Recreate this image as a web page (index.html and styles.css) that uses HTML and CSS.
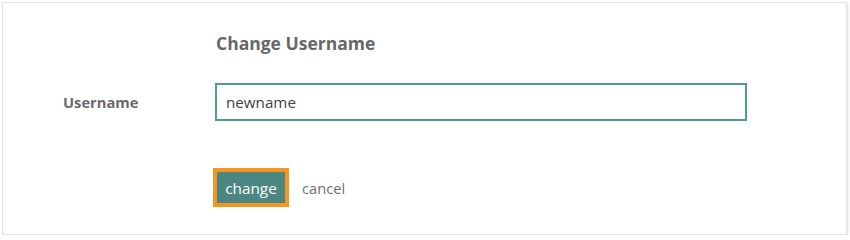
FILE: index.html
```html
<!DOCTYPE html>
<html>
<head>
<meta charset="utf-8">
<link rel="stylesheet" href="styles.css">
</head>
<body>
<div class="card">
  <div class="row head-row">
    <div class="label-col"></div>
    <h2 class="title">Change Username</h2>
  </div>
  <div class="row field-row">
    <label class="label-col label" for="u">Username</label>
    <div class="input">newname</div>
  </div>
  <div class="row actions-row">
    <div class="label-col"></div>
    <div class="actions">
      <button class="btn">change</button>
      <span class="cancel">cancel</span>
    </div>
  </div>
</div>
</body>
</html>
```
FILE: styles.css
```css
html, body {
  margin: 0;
  padding: 0;
  background: #ffffff;
}
body {
  font-family: "Open Sans", "Liberation Sans", sans-serif;
  color: #666;
}
.card {
  box-sizing: border-box;
  margin: 2px 0 0 2px;
  width: 845px;
  height: 233px;
  border: 1px solid #e2e2e2;
  box-shadow: 1px 1px 2px rgba(0,0,0,0.12);
  background: #fff;
}
.row {
  display: grid;
  grid-template-columns: 212px 532px;
  align-items: center;
}
.label-col {
  padding-left: 60px;
}
.head-row {
  margin-top: 29px;
}
.title {
  margin: 0;
  font-size: 17.5px;
  font-weight: 700;
  color: #676767;
  line-height: 22px;
  padding-left: 1px;
}
.field-row {
  margin-top: 29px;
}
.label {
  font-size: 14.7px;
  font-weight: 700;
  color: #6a6a6a;
  line-height: 20px;
}
.input {
  box-sizing: border-box;
  height: 38px;
  border: 2px solid #4f9b9b;
  padding: 0 9px;
  font-size: 15.2px;
  line-height: 34px;
  color: #3f3f3f;
}
.actions-row {
  margin-top: 47px;
}
.actions {
  display: flex;
  align-items: center;
  gap: 13px;
}
.btn {
  font-family: inherit;
  box-sizing: border-box;
  height: 39px;
  width: 76px;
  background: #4a8682;
  color: #fff;
  border: 4px solid #f7961e;
  font-size: 15.3px;
  padding: 0;
  line-height: 30px;
  margin-left: -2px;
}
.cancel {
  font-size: 14.7px;
  color: #707070;
}
```
